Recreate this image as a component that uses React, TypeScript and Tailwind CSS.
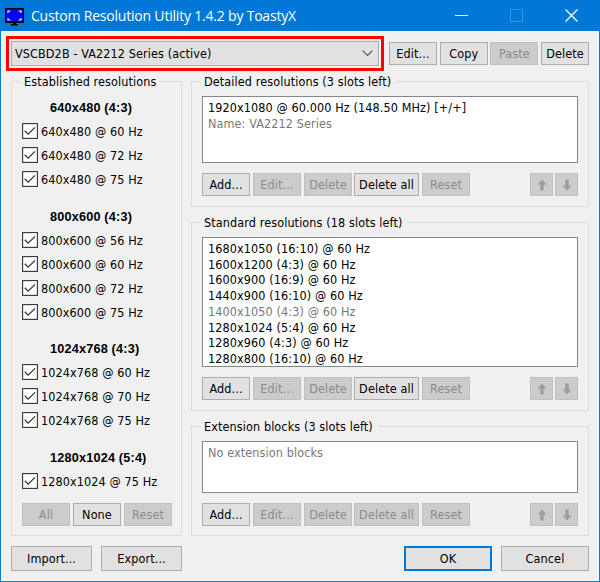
import { ReactNode } from "react";

const established = [
  { title: "640x480 (4:3)", rates: ["640x480 @ 60 Hz", "640x480 @ 72 Hz", "640x480 @ 75 Hz"] },
  {
    title: "800x600 (4:3)",
    rates: ["800x600 @ 56 Hz", "800x600 @ 60 Hz", "800x600 @ 72 Hz", "800x600 @ 75 Hz"],
  },
  { title: "1024x768 (4:3)", rates: ["1024x768 @ 60 Hz", "1024x768 @ 70 Hz", "1024x768 @ 75 Hz"] },
  { title: "1280x1024 (5:4)", rates: ["1280x1024 @ 75 Hz"] },
];

const standard = [
  "1680x1050 (16:10) @ 60 Hz",
  "1600x1200 (4:3) @ 60 Hz",
  "1600x900 (16:9) @ 60 Hz",
  "1440x900 (16:10) @ 60 Hz",
  "1400x1050 (4:3) @ 60 Hz",
  "1280x1024 (5:4) @ 60 Hz",
  "1280x960 (4:3) @ 60 Hz",
  "1280x800 (16:10) @ 60 Hz",
];

type ButtonProps = {
  children: ReactNode;
  disabled?: boolean;
  className?: string;
};

function Button({ children, disabled, className = "w-12 h-[23px] border pt-px" }: ButtonProps) {
  const colors = disabled
    ? "bg-[#cccccc] border-[#c0c0c0] text-[#8b8b8b]"
    : "bg-[#e1e1e1] border-[#adadad] text-black";
  return (
    <button
      disabled={disabled}
      className={`flex items-center justify-center shrink-0 whitespace-nowrap ${colors} ${className}`}
    >
      {children}
    </button>
  );
}

function Arrow({ down }: { down?: boolean }) {
  return (
    <svg width="10" height="12" viewBox="0 0 10 12" className={down ? "rotate-180" : ""}>
      <path d="M5 0.5 L9.5 5.5 H6.7 V11.5 H3.3 V5.5 H0.5 Z" fill="#9d9d9d" />
    </svg>
  );
}

function Group({ title, className, children }: { title: string; className: string; children: ReactNode }) {
  return (
    <fieldset className={`border border-[#dcdcdc] min-w-0 pl-[10px] pr-[10px] ${className}`}>
      <legend className="h-4 leading-[18px] -ml-px pl-[3px] pr-[4px] whitespace-nowrap">{title}</legend>
      {children}
    </fieldset>
  );
}

function ListBox({ className, children }: { className: string; children: ReactNode }) {
  return (
    <div
      className={`bg-white border border-[#828790] pl-[5px] pt-[3px] leading-[15.7px] overflow-hidden whitespace-nowrap ${className}`}
    >
      {children}
    </div>
  );
}

function Toolbar({ empty }: { empty?: boolean }) {
  return (
    <div className="flex mt-[10px]">
      <div className="flex gap-[3px]">
        <Button>Add...</Button>
        <Button disabled>Edit...</Button>
        <Button disabled>Delete</Button>
        <Button disabled={empty} className="w-[65px] h-[23px] border pt-px -ml-px">Delete all</Button>
        <Button disabled>Reset</Button>
      </div>
      <div className="flex gap-[2px] ml-auto">
        <Button disabled className="w-[23px] h-[23px] border"><Arrow /></Button>
        <Button disabled className="w-[23px] h-[23px] border"><Arrow down /></Button>
      </div>
    </div>
  );
}

function CheckRow({ label }: { label: string }) {
  return (
    <div className="flex items-center h-6 gap-[3px]">
      <svg width="16" height="16" viewBox="0 0 16 16" className="shrink-0">
        <rect x="0.6" y="0.6" width="14.8" height="14.8" fill="#fff" stroke="#333" strokeWidth="1.1" />
        <path d="M2.8 7.8 L6.2 11.2 L13 4.4" fill="none" stroke="#333" strokeWidth="1.3" />
      </svg>
      <span className="whitespace-nowrap pt-[2px]">{label}</span>
    </div>
  );
}

function TitleBar() {
  return (
    <div className="flex items-center h-[31px] bg-[#0078d7] text-white">
      <svg width="19" height="18" viewBox="0 0 19 18" className="ml-1 mt-[2px] shrink-0">
        <rect x="0" y="0" width="19" height="15" fill="#000" />
        <rect x="1.3" y="1.3" width="16.4" height="12.2" fill="#0000ff" />
        <path
          d="M3 5 V3 H5.5 M13.5 3 H16 V5 M16 10 V12 H13.5 M5.5 12 H3 V10"
          fill="none"
          stroke="#fff"
          strokeWidth="1.2"
        />
        <path d="M8 15 H11 V16 H13 V17.5 H6 V16 H8 Z" fill="#000" />
      </svg>
      <span className="ml-[7px] text-[14px] whitespace-nowrap tracking-[-0.2px] font-['Open_Sans','Noto_Sans',sans-serif]">
        Custom Resolution Utility 1.4.2 by ToastyX
      </span>
      <div className="flex items-center ml-auto mr-[21px] gap-[42px]">
        <svg width="13" height="13" viewBox="0 0 13 13">
          <path d="M0 6.5 H13" stroke="#fff" strokeWidth="1" />
        </svg>
        <svg width="13" height="13" viewBox="0 0 13 13">
          <rect x="0.5" y="0.5" width="12" height="12" fill="none" stroke="#3394e0" />
        </svg>
        <svg width="13" height="13" viewBox="0 0 13 13">
          <path d="M0.5 0.5 L12.5 12.5 M12.5 0.5 L0.5 12.5" stroke="#fff" strokeWidth="1.3" />
        </svg>
      </div>
    </div>
  );
}

export default function App() {
  return (
    <div className="w-[600px] h-[582px] overflow-hidden bg-[#f0f0f0] border border-t-0 border-[#0078d7] text-black text-[12.5px] leading-4 font-['DejaVu_Sans_Condensed','DejaVu_Sans',sans-serif] tracking-[0.11px]">
      <TitleBar />
      <div className="h-[550px] border border-[#fafafa] pl-1 pt-1">
        {/* Display selector */}
        <div className="flex items-center">
          <div className="w-[378px] h-[35px] border-[3px] border-[#ff0000] p-[2px] shrink-0">
            <div className="flex items-center justify-between h-[25px] bg-[#e1e1e1] border border-[#adadad] pl-[3px] pr-[5px]">
              <span className="pt-px">VSCBD2B - VA2212 Series (active)</span>
              <svg width="11" height="7" viewBox="0 0 11 7">
                <path d="M0.7 0.7 L5.5 5.5 L10.3 0.7" fill="none" stroke="#555" strokeWidth="1.2" />
              </svg>
            </div>
          </div>
          <div className="flex gap-[2.7px] ml-[5px]">
            <Button>Edit...</Button>
            <Button>Copy</Button>
            <Button disabled>Paste</Button>
            <Button>Delete</Button>
          </div>
        </div>

        <div className="flex gap-[9px] mt-[2px] ml-[5px]">
          <Group title="Established resolutions" className="w-[171px] h-[463px]">
            <div className="pt-[6px]">
              {established.map((group) => (
                <div key={group.title} className="pb-[12.5px]">
                  <div className="h-6 leading-[26px] pl-[28px] font-bold text-[12.7px] tracking-[0.18px] font-['Liberation_Sans',sans-serif]">
                    {group.title}
                  </div>
                  {group.rates.map((rate) => (
                    <CheckRow key={rate} label={rate} />
                  ))}
                </div>
              ))}
            </div>
            <div className="flex gap-[3px] -mt-[2px]">
              <Button disabled>All</Button>
              <Button>None</Button>
              <Button disabled>Reset</Button>
            </div>
          </Group>

          <div className="flex flex-col w-[398px] gap-[7px]">
            <Group title="Detailed resolutions (3 slots left)" className="h-[134px]">
              <ListBox className="h-[67px] mt-[7px]">
                <div>1920x1080 @ 60.000 Hz (148.50 MHz) [+/+]</div>
                <div className="text-[#787878]">Name: VA2212 Series</div>
              </ListBox>
              <Toolbar />
            </Group>
            <Group title="Standard resolutions (18 slots left)" className="h-[197px]">
              <ListBox className="h-[130px] mt-[7px]">
                {standard.map((mode) => (
                  <div key={mode} className={mode.startsWith("1400") ? "text-[#787878]" : ""}>
                    {mode}
                  </div>
                ))}
              </ListBox>
              <Toolbar />
            </Group>
            <Group title="Extension blocks (3 slots left)" className="h-[118px]">
              <ListBox className="h-[52px] mt-[7px]">
                <div className="text-[#787878]">No extension blocks</div>
              </ListBox>
              <Toolbar empty />
            </Group>
          </div>
        </div>

        {/* Bottom actions */}
        <div className="flex ml-[5px] mt-[10px] w-[578px]">
          <Button className="w-[81px] h-[25px] border pt-px">Import...</Button>
          <Button className="w-[81px] h-[25px] border pt-px ml-[9px]">Export...</Button>
          <Button className="w-[88px] h-[25px] pt-px ml-auto outline-2 outline-[#0078d7] -outline-offset-2">OK</Button>
          <Button className="w-[88px] h-[25px] border pt-px ml-[9px]">Cancel</Button>
        </div>
      </div>
    </div>
  );
}
